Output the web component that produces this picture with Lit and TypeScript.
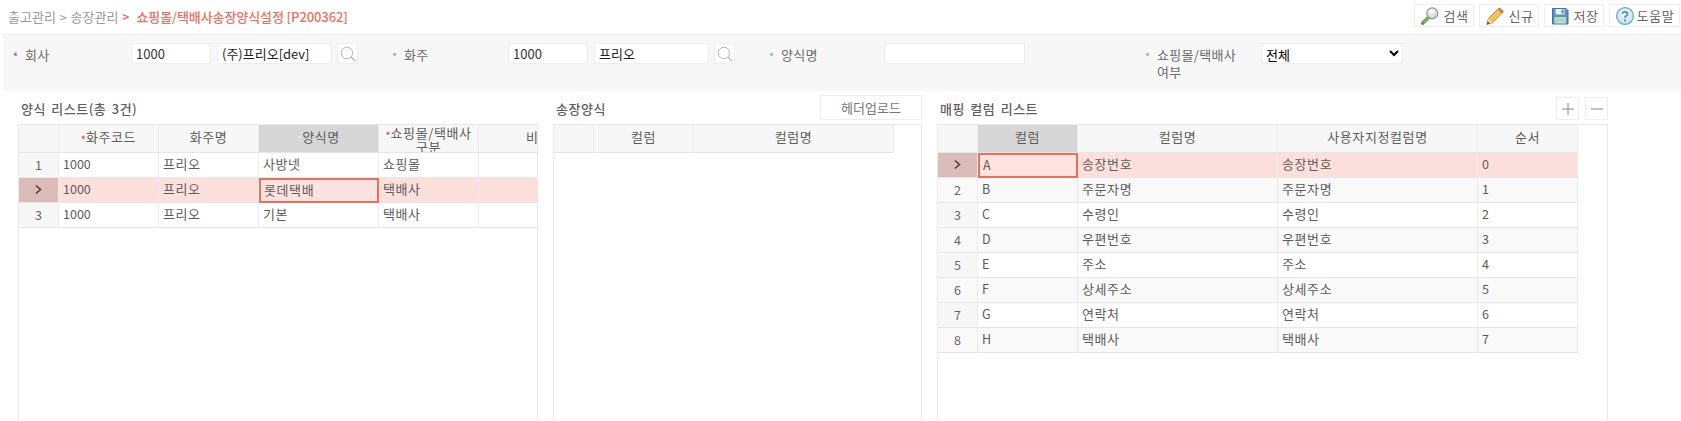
import { LitElement, html, css, svg } from "lit";
import { customElement } from "lit/decorators.js";

type Col = { label: string; width: number; star?: boolean; sorted?: boolean; wrap?: boolean };

const icons = {
  search: svg`<svg class="ico" viewBox="0 0 20 20" width="20" height="20">
    <defs><radialGradient id="lens" cx="0.4" cy="0.35" r="0.8"><stop offset="0" stop-color="#fff"/><stop offset="1" stop-color="#b9c3c6"/></radialGradient></defs>
    <path d="M8.6 11.4 2.6 17.2" stroke="#5d9e35" stroke-width="3.4" stroke-linecap="round"/>
    <path d="M9 11 3.6 16.2" stroke="#a6d37a" stroke-width="1"/>
    <circle cx="12.3" cy="7.3" r="5.5" fill="url(#lens)" stroke="#8c979b" stroke-width="1.2"/>
  </svg>`,
  pencil: svg`<svg class="ico" viewBox="0 0 20 20" width="20" height="20">
    <path d="M1.8 18.4 3.4 12.6 14.4 1.8 18.4 5.8 7.4 16.8Z" fill="#f5b93f" stroke="#b8802a" stroke-width=".9" stroke-linejoin="round"/>
    <path d="M4.6 13.6 15.2 3M6.4 15.4 17 4.8" stroke="#fbe19a" stroke-width="1"/>
    <path d="M3.4 12.6 7.4 16.8 1.8 18.4Z" fill="#f3d7a8"/>
    <path d="M1.8 18.4 2.7 15.2 5 17.5Z" fill="#6b5232"/>
    <path d="M14.4 1.8 18.4 5.8 16.8 7.4 12.8 3.4Z" fill="#e2705a"/>
  </svg>`,
  save: svg`<svg class="ico" viewBox="0 0 20 20" width="20" height="20">
    <path d="M2.5 2.5H16L18 4.5V18H2.5Z" fill="#5c8fc9" stroke="#3d6fa8" stroke-width="1"/>
    <rect x="5.5" y="3" width="9" height="5.5" fill="#e8f0f8"/>
    <rect x="11.5" y="3.8" width="2" height="3.6" fill="#4d7fb8"/>
    <rect x="4.5" y="11" width="11.5" height="6.5" fill="#bfe3c6"/>
    <path d="M4.5 13H16M4.5 15H16" stroke="#8fc7a0" stroke-width=".8"/>
  </svg>`,
  help: svg`<svg class="ico" viewBox="0 0 20 20" width="20" height="20">
    <defs><radialGradient id="hb" cx="0.5" cy="0.4" r="0.7"><stop offset="0" stop-color="#f6fbff"/><stop offset="1" stop-color="#bcdcf2"/></radialGradient></defs>
    <circle cx="10" cy="10" r="8.4" fill="url(#hb)" stroke="#6ea6cf" stroke-width="1.3"/>
    <path d="M7.4 7.7C7.6 5.2 12.6 5.2 12.6 8 12.6 9.8 10 9.8 10 11.9" fill="none" stroke="#4a8dbd" stroke-width="1.7"/>
    <circle cx="10" cy="14.4" r="1.1" fill="#4a8dbd"/>
  </svg>`,
};

const lens = svg`<svg viewBox="0 0 20 20" width="18" height="18"><circle cx="8.8" cy="8.8" r="6.4" fill="none" stroke="#b5b5b5" stroke-width="1.1"/><path d="M13.4 13.4 18 18" stroke="#a5a5a5" stroke-width="1.2"/></svg>`;
const chev = svg`<svg viewBox="0 0 10 12" width="9" height="11"><path d="M2.2 1.6 7.2 6 2.2 10.4" fill="none" stroke="#5b3533" stroke-width="1.7"/></svg>`;

const listCols: Col[] = [
  { label: "화주코드", width: 100, star: true },
  { label: "화주명", width: 100 },
  { label: "양식명", width: 120, star: true, sorted: true },
  { label: "쇼핑몰/택배사 구분", width: 100, star: true, wrap: true },
  { label: "비고", width: 120 },
];
const listRows = [
  ["1000", "프리오", "사방넷", "쇼핑몰", ""],
  ["1000", "프리오", "롯데택배", "택배사", ""],
  ["1000", "프리오", "기본", "택배사", ""],
];
const formCols: Col[] = [
  { label: "컬럼", width: 100 },
  { label: "컬럼명", width: 200 },
];
const mapCols: Col[] = [
  { label: "컬럼", width: 100, sorted: true },
  { label: "컬럼명", width: 200 },
  { label: "사용자지정컬럼명", width: 200 },
  { label: "순서", width: 100 },
];
const names = ["송장번호", "주문자명", "수령인", "우편번호", "주소", "상세주소", "연락처", "택배사"];
const mapRows = names.map((n, i) => ["ABCDEFGH"[i], n, n, String(i)]);
const isKo = (v: string) => /[가-힣]/.test(v);

@customElement("data-grid")
class DataGrid extends LitElement {
  static properties = {
    cols: { attribute: false },
    rows: { attribute: false },
    selRow: { type: Number },
    selCol: { type: Number },
    zebra: { type: Boolean },
  };
  cols: Col[] = [];
  rows: string[][] = [];
  selRow = -1;
  selCol = -1;
  zebra = false;

  static styles = css`
    :host { display: block; flex: 1; min-height: 0; border: 1px solid #e9e9e9; border-bottom: none; overflow: hidden; }
    .row { display: grid; width: max-content; }
    .head { height: 28px; }
    .body { height: 25px; }
    .c { box-sizing: border-box; border-right: 1px solid #ececec; border-bottom: 1px solid #e6e6e6; display: flex; align-items: center; padding: 0 4px 4px; color: #5c5c5c; font-size: 12.5px; white-space: nowrap; overflow: hidden; background: #fff; }
    .c.ko { font-size: 13px; letter-spacing: .6px; }
    .head .c { background: #f7f7f7; justify-content: center; text-align: center; line-height: 14px; white-space: normal; padding: 0 0 3px; font-size: 13px; letter-spacing: .6px; }
    .head .c.wrap { padding: 3px 0 0; }
    .head .c.sorted { background: #d7d7d7; }
    .star { color: #e23b3b; font-size: 11px; position: relative; top: 2px; letter-spacing: 0; }
    .sorted .star { color: #eee; }
    .c.num { justify-content: center; background: #f7f7f7; color: #666; padding-bottom: 2px; }
    .zebra .c { background: #f9f9f9; }
    .sel .c { background: #fddfdc; }
    .sel .c.num { background: #dbbcb9; }
    .sel .c.active { border: 2px solid #e8705f; padding: 0 3px 2px; background: #fde3e0; }
  `;

  render() {
    const tpl = `40px ${this.cols.map((c) => c.width + "px").join(" ")}`;
    return html`
      <div class="row head" style="grid-template-columns:${tpl}">
        <div class="c"></div>
        ${this.cols.map(
          (c) => html`<div class="c ${c.sorted ? "sorted" : ""} ${c.wrap ? "wrap" : ""}"><span>${c.star ? html`<span class="star">*</span>` : ""}${c.label}</span></div>`
        )}
      </div>
      ${this.rows.map(
        (r, i) => html`
          <div class="row body ${i === this.selRow ? "sel" : ""} ${this.zebra && i % 2 === 1 ? "zebra" : ""}" style="grid-template-columns:${tpl}">
            <div class="c num">${i === this.selRow ? chev : i + 1}</div>
            ${r.map(
              (v, j) => html`<div class="c ${isKo(v) ? "ko" : ""} ${i === this.selRow && j === this.selCol ? "active" : ""}">${v}</div>`
            )}
          </div>
        `
      )}
    `;
  }
}

@customElement("app-root")
export class AppRoot extends LitElement {
  static styles = css`
    :host { display: flex; flex-direction: column; height: 421px; overflow: hidden; background: #fff; font: 13px "Noto Sans CJK KR", "Noto Sans", sans-serif; color: #555; }
    .top { height: 34px; display: flex; justify-content: space-between; padding: 4px 1px 0 8px; box-sizing: border-box; }
    .crumb { display: flex; gap: 4px; line-height: 26px; color: #999; }
    .crumb b { color: #e8705f; font-weight: 500; margin-left: 3px; letter-spacing: -.1px; }
    .crumb i { font-style: normal; font-size: 12px; }
    .crumb i.cur { color: #e8705f; font-weight: 700; }
    .actions { display: flex; gap: 5px; }
    .btn { height: 23px; box-sizing: border-box; border: 1px solid #eee; background: #fff; display: flex; align-items: center; justify-content: center; gap: 4px; color: #666; padding: 0 2px; font: inherit; letter-spacing: .5px; }
    .btn.b { width: 60px; }
    .btn.h { width: 71px; gap: 2px; }
    .ico { flex: none; }
    .filter { margin-left: 3px; height: 57px; box-sizing: border-box; background: #f7f7f7; border-top: 1px solid #eee; padding: 8px 0 0 10px; display: grid; grid-template-columns: 379px 377px 376px 1fr; }
    .field { display: flex; align-items: flex-start; }
    .lab { display: flex; width: 118px; line-height: 17px; padding-top: 3px; box-sizing: border-box; color: #6a6a6a; letter-spacing: .3px; }
    .f2 .lab, .f4 .lab { width: 116px; }
    .f3 .lab { width: 115px; }
    .lab .st { width: 12px; flex: none; color: #999; font-size: 11px; line-height: 21px; }
    .lab .st.req { color: #d92b2b; }
    .lab .tx { width: 86px; }
    input, select, .sb { height: 21px; box-sizing: border-box; border: 1px solid #eee; background: #fff; font: inherit; color: #333; padding: 0 4px; margin: 0; outline: none; }
    .code { width: 80px; margin-right: 6px; }
    .name { width: 115px; margin-right: 5px; color: #222; }
    .sb { width: 21px; padding: 0; display: flex; align-items: center; justify-content: center; }
    .form { width: 141px; }
    select { width: 142px; color: #000; padding: 0; }
    .panels { flex: 1; min-height: 0; display: flex; gap: 15px; padding-left: 18px; }
    .panel { display: flex; flex-direction: column; }
    .p1 { width: 520px; }
    .p2 { width: 369px; }
    .p3 { width: 671px; }
    .ph { height: 33px; display: flex; justify-content: space-between; align-items: flex-start; }
    .title { padding: 8px 0 0 3px; line-height: 19px; color: #5f5f5f; font-weight: 500; letter-spacing: .5px; word-spacing: 2px; }
    .upl { height: 25px; width: 102px; box-sizing: border-box; margin-top: 4px; border: 1px solid #eee; background: #fff; color: #777; font: inherit; padding: 0; }
    .tools { display: flex; gap: 6px; margin-top: 6px; }
    .sq { width: 23px; height: 23px; box-sizing: border-box; border: 1px solid #eee; background: #fff; display: flex; align-items: center; justify-content: center; padding: 0; }
  `;

  render() {
    return html`
      <div class="top">
        <div class="crumb"><span>출고관리</span><i>&gt;</i><span>송장관리</span><i class="cur">&gt;</i><b>쇼핑몰/택배사송장양식설정 [P200362]</b></div>
        <div class="actions">
          <button class="btn b">${icons.search}검색</button>
          <button class="btn b">${icons.pencil}신규</button>
          <button class="btn b">${icons.save}저장</button>
          <button class="btn h">${icons.help}도움말</button>
        </div>
      </div>
      <div class="filter">
        <div class="field f1">
          <div class="lab"><span class="st req">*</span><span class="tx">회사</span></div>
          <input class="code" value="1000" /><input class="name" value="(주)프리오[dev]" /><div class="sb">${lens}</div>
        </div>
        <div class="field f2">
          <div class="lab"><span class="st">*</span><span class="tx">화주</span></div>
          <input class="code" value="1000" /><input class="name" value="프리오" /><div class="sb">${lens}</div>
        </div>
        <div class="field f3">
          <div class="lab"><span class="st">*</span><span class="tx">양식명</span></div>
          <input class="form" />
        </div>
        <div class="field f4">
          <div class="lab"><span class="st">*</span><span class="tx">쇼핑몰/택배사 여부</span></div>
          <select><option>전체</option></select>
        </div>
      </div>
      <div class="panels">
        <section class="panel p1">
          <div class="ph"><div class="title">양식 리스트(총 3건)</div></div>
          <data-grid .cols=${listCols} .rows=${listRows} .selRow=${1} .selCol=${2}></data-grid>
        </section>
        <section class="panel p2">
          <div class="ph"><div class="title">송장양식</div><button class="upl">헤더업로드</button></div>
          <data-grid .cols=${formCols} .rows=${[]}></data-grid>
        </section>
        <section class="panel p3">
          <div class="ph">
            <div class="title">매핑 컬럼 리스트</div>
            <div class="tools">
              <button class="sq"><svg viewBox="0 0 14 14" width="14" height="14"><path d="M7 1V13M1 7H13" stroke="#888" stroke-width="1"/></svg></button>
              <button class="sq"><svg viewBox="0 0 14 14" width="14" height="14"><path d="M1 7H13" stroke="#888" stroke-width="1"/></svg></button>
            </div>
          </div>
          <data-grid .cols=${mapCols} .rows=${mapRows} .selRow=${0} .selCol=${0} .zebra=${true}></data-grid>
        </section>
      </div>
    `;
  }
}
void DataGrid;
